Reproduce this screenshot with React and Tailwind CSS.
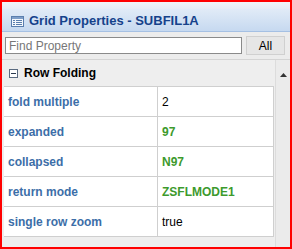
import { useState } from 'react';

const rows = [
  { label: 'fold multiple', value: '2', kind: 'plain' },
  { label: 'expanded', value: '97', kind: 'set' },
  { label: 'collapsed', value: 'N97', kind: 'set' },
  { label: 'return mode', value: 'ZSFLMODE1', kind: 'set' },
  { label: 'single row zoom', value: 'true', kind: 'plain' },
];

function GridIcon() {
  return (
    <svg width="13" height="11" viewBox="0 0 13 11">
      <rect x="0.5" y="0.5" width="12" height="10" fill="#f4f8fc" stroke="#5b7fae" />
      <rect x="1" y="1" width="11" height="2" fill="#7e9ec8" />
      <rect x="2" y="4" width="2" height="1" fill="#5b7fae" />
      <rect x="5" y="4" width="6" height="1" fill="#5b7fae" />
      <rect x="2" y="6" width="2" height="1" fill="#5b7fae" />
      <rect x="5" y="6" width="6" height="1" fill="#5b7fae" />
      <rect x="2" y="8" width="2" height="1" fill="#5b7fae" />
      <rect x="5" y="8" width="6" height="1" fill="#5b7fae" />
    </svg>
  );
}

export default function App() {
  const [query, setQuery] = useState('');

  return (
    <div className="w-[292px] h-[249px] border-2 border-[#ff0000] bg-[#ececec] flex flex-col overflow-hidden font-['Liberation_Sans',Arial,sans-serif]">
      <div className="h-[7px] shrink-0 bg-gradient-to-b from-[#f2f4f7] to-[#e6ecf4]" />
      <div className="h-[23px] shrink-0 flex items-center gap-[5px] pl-[9px] pt-[2px] bg-gradient-to-b from-[#e1ebf7] to-[#c6d9f0] border-b border-[#a5c0e3]">
        <GridIcon />
        <span className="text-[13px] font-bold text-[#15428b]">Grid Properties - SUBFIL1A</span>
      </div>

      <div className="h-[28px] shrink-0 flex items-center pl-[3px] pr-[4px] gap-[4px] border-b border-[#d4d4d4]">
        <input
          value={query}
          onChange={(e) => setQuery(e.target.value)}
          placeholder="Find Property"
          className="w-[237px] h-[17px] bg-white border border-[#8a8a8a] px-[3px] text-[12px] text-black placeholder:text-[#777] outline-none"
        />
        <button className="w-[39px] h-[19px] bg-[#e6e6e6] border border-[#d0d0d0] text-[12px] text-black">
          All
        </button>
      </div>

      <div className="flex-1 flex pl-[2px] bg-[#eeeeee]">
        <div className="w-[270px] flex flex-col">
          <div className="h-[27px] flex items-center gap-[6px] pl-[5px] border-b border-[#cfcfcf]">
            <div className="w-[9px] h-[9px] border border-[#5a6a80] bg-white flex items-center justify-center">
              <div className="w-[5px] h-px bg-[#2b3a4f]" />
            </div>
            <span className="text-[12px] font-bold text-black">Row Folding</span>
          </div>
          {rows.map((r) => (
            <div key={r.label} className="h-[30px] flex bg-white border-b border-[#cfcfcf] border-r">
              <div className="w-[154px] shrink-0 flex items-center pl-[4px] border-r border-[#cfcfcf] text-[12px] font-bold text-[#3c6ea8]">
                {r.label}
              </div>
              <div
                className={
                  r.kind === 'set'
                    ? 'flex-1 flex items-center pl-[4px] text-[12px] font-bold text-[#3d9a2d]'
                    : 'flex-1 flex items-center pl-[4px] text-[12px] text-black'
                }
              >
                {r.value}
              </div>
            </div>
          ))}
        </div>
        <div className="w-[15px] ml-[1px] bg-[#ebebeb] border-l border-[#dcdcdc] flex flex-col items-center pt-[13px]">
          <svg width="7" height="4" viewBox="0 0 7 4">
            <path d="M3.5 0 L7 4 L0 4 Z" fill="#333" />
          </svg>
        </div>
      </div>
    </div>
  );
}
